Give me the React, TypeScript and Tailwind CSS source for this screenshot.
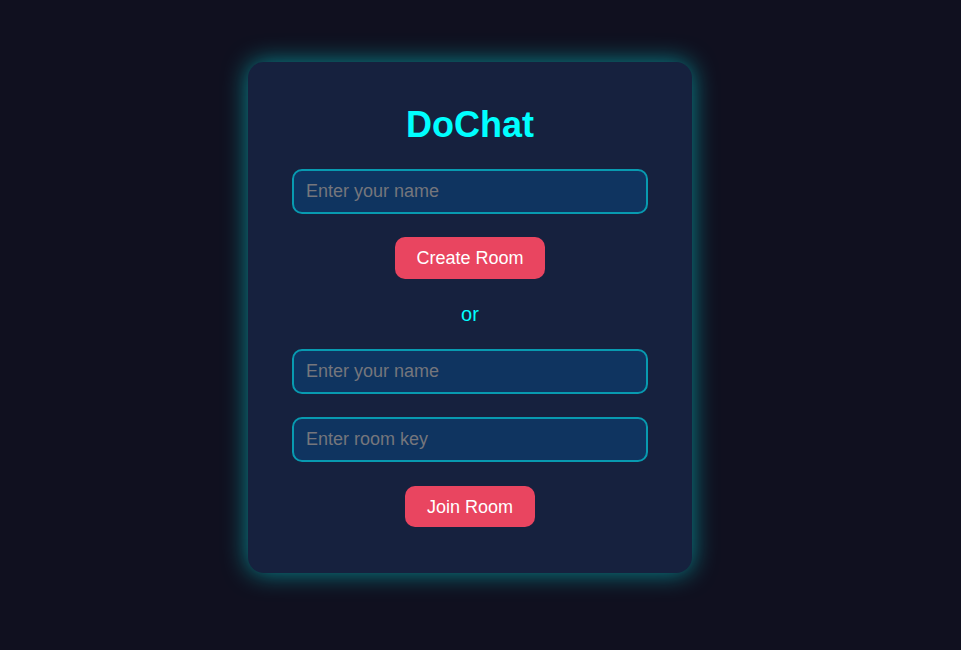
import { useState } from "react";

const inputClass =
  "block w-full h-[45px] px-[12px] rounded-[10px] border-2 border-[#089ab0] bg-[#0f3460] text-[18px] text-white placeholder:text-[#75767c] outline-none";

const buttonClass =
  "block mx-auto rounded-[10px] bg-[#e94560] text-white text-[18px] leading-none";

export default function App() {
  const [name, setName] = useState("");
  const [joinName, setJoinName] = useState("");
  const [roomKey, setRoomKey] = useState("");

  return (
    <div
      className="min-h-screen w-full bg-[#10101f] flex items-start"
      style={{ fontFamily: '"Liberation Sans", Arial, sans-serif' }}
    >
      {/* Card */}
      <div className="ml-[248px] mt-[62px] w-[444px] h-[511px] rounded-[16px] bg-[#16213e] px-[44px] pt-[40px] shadow-[0_0_24px_rgba(0,255,255,0.5)]">
        <h1 className="text-center text-[36px] leading-[46px] font-bold text-[#00ffff]">
          DoChat
        </h1>

        <input
          className={`${inputClass} mt-[21px]`}
          placeholder="Enter your name"
          value={name}
          onChange={(e) => setName(e.target.value)}
        />
        <button className={`${buttonClass} px-[21px] mt-[23px] h-[42px]`}>Create Room</button>

        <p className="my-[23px] text-center text-[20px] leading-[24px] text-[#00ffff]">or</p>

        <input
          className={inputClass}
          placeholder="Enter your name"
          value={joinName}
          onChange={(e) => setJoinName(e.target.value)}
        />
        <input
          className={`${inputClass} mt-[23px]`}
          placeholder="Enter room key"
          value={roomKey}
          onChange={(e) => setRoomKey(e.target.value)}
        />
        <button className={`${buttonClass} px-[22px] mt-[24px] h-[41px]`}>Join Room</button>
      </div>
    </div>
  );
}
